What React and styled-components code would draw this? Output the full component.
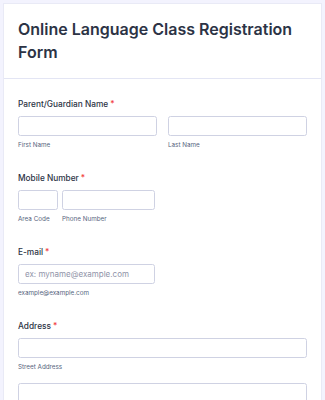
import React from "react";
import styled, { createGlobalStyle } from "styled-components";

const Global = createGlobalStyle`
  html, body { margin: 0; padding: 0; background: #f3f3fe; }
  body { font-family: Inter, "Noto Sans", sans-serif; color: #2c3345; }
  * { box-sizing: border-box; }
`;

const Page = styled.div`
  padding: 4px 4px 0 4px;
  height: 400px;
  overflow: hidden;
`;

const Card = styled.div`
  background: #ffffff;
  box-shadow: 0 0 0 1px #e9eaf6;
  min-height: 420px;
`;

const Header = styled.header`
  padding: 14px 14px 14px 14px;
  border-bottom: 1px solid #e3e5f4;
`;

const Title = styled.h1`
  margin: 0;
  font-size: 16px;
  line-height: 23px;
  font-weight: 600;
  color: #2c3345;
  letter-spacing: 0;
`;

const Body = styled.div`
  padding: 19px 14px 0 14px;
  display: flex;
  flex-direction: column;
  gap: 22px;
`;

const Field = styled.div`
  display: flex;
  flex-direction: column;
  gap: 6px;
`;

const Label = styled.label`
  font-size: 8.3px;
  line-height: 12px;
  font-weight: 500;
  color: #2c3345;
`;

const Req = styled.span`
  color: #f23a3c;
  margin-left: 2px;
`;

const Row = styled.div`
  display: flex;
  gap: ${(p) => p.$gap || 11}px;
  width: ${(p) => p.$width || "100%"};
`;

const Part = styled.div`
  display: flex;
  flex-direction: column;
  gap: 4px;
  flex: ${(p) => (p.$w ? `0 0 ${p.$w}px` : "1 1 0")};
  min-width: 0;
  margin-top: ${(p) => p.$mt || 0}px;
`;

const Input = styled.input`
  display: block;
  width: 100%;
  height: 20px;
  border: 1px solid #cfd2e3;
  border-radius: 2.5px;
  background: #fff;
  padding: 0 6px;
  font-family: Inter, "Noto Sans", sans-serif;
  font-size: 8px;
  color: #2c3345;
  outline: none;
  &::placeholder { color: #8f93a8; }
`;

const Sub = styled.span`
  font-size: 6.3px;
  line-height: 10px;
  color: #57647e;
`;

export default function App() {
  return (
    <>
      <Global />
      <Page>
        <Card>
          <Header>
            <Title>Online Language Class Registration Form</Title>
          </Header>
          <Body>
            <Field>
              <Label>Parent/Guardian Name<Req>*</Req></Label>
              <Row>
                <Part>
                  <Input />
                  <Sub>First Name</Sub>
                </Part>
                <Part>
                  <Input />
                  <Sub>Last Name</Sub>
                </Part>
              </Row>
            </Field>
            <Field>
              <Label>Mobile Number<Req>*</Req></Label>
              <Row $gap={4} $width="137px">
                <Part $w={40}>
                  <Input />
                  <Sub>Area Code</Sub>
                </Part>
                <Part>
                  <Input />
                  <Sub>Phone Number</Sub>
                </Part>
              </Row>
            </Field>
            <Field>
              <Label>E-mail<Req>*</Req></Label>
              <Row $width="137px">
                <Part>
                  <Input placeholder="ex: myname@example.com" />
                  <Sub>example@example.com</Sub>
                </Part>
              </Row>
            </Field>
            <Field>
              <Label>Address<Req>*</Req></Label>
              <Part>
                <Input />
                <Sub>Street Address</Sub>
              </Part>
              <Part $mt={5}>
                <Input />
              </Part>
            </Field>
          </Body>
        </Card>
      </Page>
    </>
  );
}
